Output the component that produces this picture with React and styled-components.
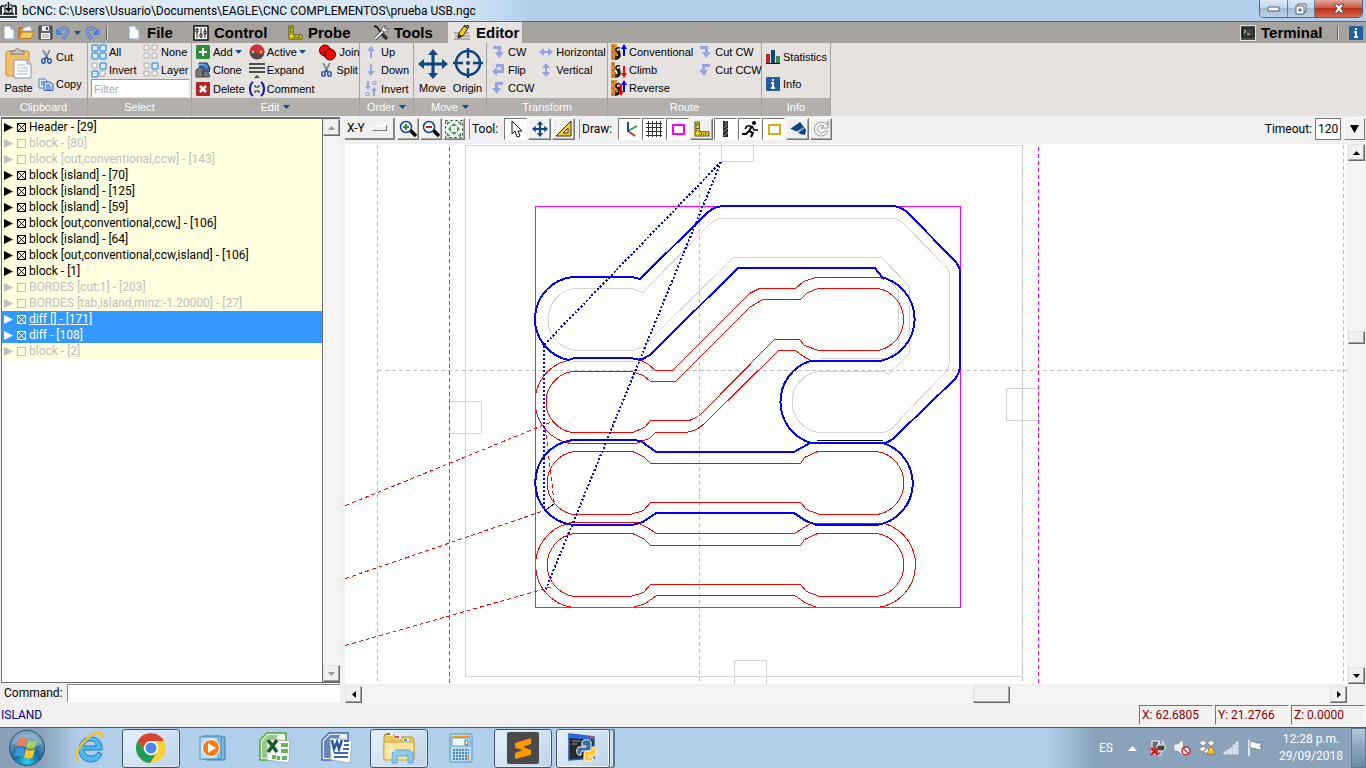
import React, { useState } from "react";
import styled, { createGlobalStyle } from "styled-components";

const blocks = [
  { name: "Header - [29]", on: true },
  { name: "block - [80]" },
  { name: "block [out,conventional,ccw] - [143]" },
  { name: "block [island] - [70]", on: true },
  { name: "block [island] - [125]", on: true },
  { name: "block [island] - [59]", on: true },
  { name: "block [out,conventional,ccw,] - [106]", on: true },
  { name: "block [island] - [64]", on: true },
  { name: "block [out,conventional,ccw,island] - [106]", on: true },
  { name: "block - [1]", on: true },
  { name: "BORDES [cut:1] - [203]" },
  { name: "BORDES [tab,island,minz:-1.20000] - [27]" },
  { name: "diff [] - [171]", on: true, selected: true, active: true },
  { name: "diff - [108]", on: true, selected: true },
  { name: "block - [2]" },
];

/* ---------- icons ---------- */

const Svg = ({ s = 16, w, h, box = "0 0 16 16", children }) => (
  <svg width={w || s} height={h || s} viewBox={box} fill="none" aria-hidden="true">
    {children}
  </svg>
);

const AppIcon = () => (
  <Svg s={17} box="0 0 17 17">
    <path d="M1 4h3M13 4h3M1 4v9M16 4v9M0 15h17M3 12h11M8.5 0v7" stroke="#000" strokeWidth="1.6" />
    <path d="M5 3v8h7V3M5 3h2M10 3h2" stroke="#000" />
    <path d="M5 6h7l-3.5 4z" fill="#000" />
  </Svg>
);

const NewIcon = () => (
  <Svg w={12} h={15} box="0 0 12 15">
    <path d="M1 1h7l3 3v10H1z" fill="#fff" stroke="#8aa0c4" />
    <path d="M8 1v3h3" fill="#cfdcf0" stroke="#7089b5" />
    <path d="M11 6v8H4" stroke="#b9c6de" />
  </Svg>
);

const OpenIcon = () => (
  <Svg w={17} h={15} box="0 0 17 15">
    <path d="M1 13V3h5l1 2h6v3" fill="#d9952f" stroke="#a8660f" />
    <path d="M5 3l7-2 2 5H5z" fill="#f4f6fb" stroke="#9fb0cc" strokeWidth=".7" />
    <path d="M1 13.5L4 7h12l-3 6.5z" fill="#f8c967" stroke="#b97a1e" />
  </Svg>
);

const SaveIcon = () => (
  <Svg w={15} h={15} box="0 0 15 15">
    <path d="M1 1h13v13H1z" fill="#5c6065" stroke="#3c4044" />
    <path d="M4 1h7v5H4z" fill="#e9ebee" />
    <path d="M8 2h2v3H8z" fill="#4d5257" />
    <path d="M3 8h9v6H3z" fill="#f2f3f5" />
    <path d="M4 10h7M4 12h7" stroke="#9a9ea3" />
  </Svg>
);

const UndoIcon = ({ flip }) => (
  <Svg w={13} h={14} box="0 0 13 14">
    <g transform={flip ? "translate(13 0) scale(-1 1)" : undefined}>
      <path d="M3 5c4-5 9-3 8.5 1C11 9 9 11 7 13" stroke="#3d6cc0" strokeWidth="3" />
      <path d="M3 5c4-5 9-3 8.5 1C11 9 9 11 7 13" stroke="#86aff0" strokeWidth="1.5" />
      <path d="M0 2v7h7z" fill="#4f80d6" />
    </g>
  </Svg>
);

const Caret = () => (
  <Svg w={7} h={4} box="0 0 7 4">
    <path d="M0 0h7L3.5 4z" fill="#11508f" />
  </Svg>
);

const SlidersIcon = () => (
  <Svg s={16}>
    <path d="M1 1h14v14H1z" fill="#fff" stroke="#111" strokeWidth="1.5" />
    <path d="M4 3v10M8 3v10M12 3v10" stroke="#222" />
    <path d="M3 4h2v3H3zM7 9h2v3H7zM11 6h2v3h-2z" fill="#fff" stroke="#111" />
  </Svg>
);

const RulerIcon = ({ size = 15 }) => (
  <Svg s={size} box="0 0 15 15">
    <path d="M1 1h4v9h9v4H1z" fill="#f0dc10" stroke="#5c5300" />
    <path d="M2 3h2M2 5h1M2 7h2M2 9h1M5 12v1M7 11v2M9 12v1M11 11v2" stroke="#222" />
  </Svg>
);

const ToolsIcon = () => (
  <Svg s={16}>
    <path d="M1 1l3 1 5 7" stroke="#222" strokeWidth="2" />
    <path d="M9 9l5 5" stroke="#333" strokeWidth="3.5" />
    <path d="M2 14l8-8" stroke="#444" strokeWidth="3.5" />
    <path d="M2 14l8-8" stroke="#f0f0f0" strokeWidth="2" />
    <path d="M9 6c-1-3 1-5 4-5l-1.5 2L13 4.5 15 3c1 2-1 4-4 4z" fill="#f0f0f0" stroke="#444" strokeWidth=".8" />
  </Svg>
);

const PencilIcon = () => (
  <Svg w={17} h={16} box="0 0 17 16">
    <path d="M0 8h15M1 11h15M0 14h16" stroke="#777" />
    <path d="M4 13l1-5 5-7 4 2-5 8z" fill="#f5c71a" stroke="#222" />
    <path d="M10 1l4 2 1-2-3-1z" fill="#d99" stroke="#222" />
    <path d="M4 13l1-4 3 2z" fill="#222" />
  </Svg>
);

const TerminalIcon = () => (
  <Svg s={16}>
    <path d="M.5.5h15v15H.5z" fill="#4a504e" stroke="#e2e2e2" />
    <path d="M2 3h12v9H2z" fill="#39403e" stroke="#151515" />
    <path d="M4 5l2 1.5L4 8M7 9h3" stroke="#ddd" />
  </Svg>
);

const InfoIcon = () => (
  <Svg s={14} box="0 0 14 14">
    <rect width="14" height="14" rx="1" fill="#1f5f9f" />
    <path d="M6 2h2v2H6zM5 5h3v5h1v2H5v-2h1V7H5z" fill="#fff" />
  </Svg>
);

const PasteIcon = () => (
  <Svg w={28} h={31} box="0 0 28 31">
    <rect x="1" y="3" width="23" height="25" rx="2" fill="#eec06a" stroke="#c88f34" />
    <path d="M6 6V3h4c0-3 5-3 5 0h4v3z" fill="#c9c9c9" stroke="#777" />
    <path d="M9 12h13l4 4v14H9z" fill="#fbfcfe" stroke="#8396b5" />
    <path d="M22 12v4h4" fill="#dbe5f3" stroke="#8396b5" />
    <path d="M12 17h8M12 20h11M12 23h11M12 26h11" stroke="#a9bbd8" />
  </Svg>
);

const CutIcon = () => (
  <Svg w={11} h={14} box="0 0 11 14">
    <path d="M2 0l5 9M9 0L4 9" stroke="#7b8794" strokeWidth="1.7" />
    <ellipse cx="2.5" cy="11" rx="1.8" ry="2.2" stroke="#2458ac" strokeWidth="1.5" />
    <ellipse cx="8.5" cy="11" rx="1.8" ry="2.2" stroke="#2458ac" strokeWidth="1.5" />
    <path d="M4 9l1.5-2L7 9" stroke="#2458ac" strokeWidth="1.5" />
  </Svg>
);

const CopyIcon = () => (
  <Svg w={16} h={13} box="0 0 16 13">
    <path d="M1 1h6l2 2v7H1z" fill="#dbe7fa" stroke="#5a7fc0" />
    <path d="M6 4h6l3 2v6.5H6z" fill="#c6d9f7" stroke="#3763af" />
    <path d="M3 4h3M3 6h2M8 7h4M8 9h5M8 11h5" stroke="#3763af" />
  </Svg>
);

const CellsIcon = ({ on = [] }) => (
  <Svg s={16}>
    {[[1, 1], [9, 1], [1, 9], [9, 9]].map(([x, y], i) => (
      <rect
        key={i}
        x={x}
        y={y}
        width={on[i] ? 6 : 5}
        height={on[i] ? 6 : 5}
        rx="1"
        fill={on[i] ? "#d9ecff" : "#f6f5f4"}
        stroke={on[i] ? "#539fe3" : "#aaa7a4"}
        strokeWidth={on[i] ? 1.5 : 1}
      />
    ))}
  </Svg>
);

const AddIcon = () => (
  <Svg s={14} box="0 0 14 14">
    <rect width="14" height="14" rx="1" fill="#338c3b" />
    <path d="M7 3v8M3 7h8" stroke="#fff" strokeWidth="2" />
  </Svg>
);

const DeleteIcon = () => (
  <Svg s={14} box="0 0 14 14">
    <rect width="14" height="14" rx="1" fill="#b52225" />
    <path d="M4 4l6 6M10 4l-6 6" stroke="#fff" strokeWidth="2.5" />
  </Svg>
);

const CloneIcon = () => (
  <Svg s={16}>
    <path d="M4 1h8l3 5-1 4H6z" fill="#2c6cad" stroke="#183e68" />
    <path d="M1 8l4-3 3 2v8H1zM8 9h4l3 5-1 1H8z" fill="#777" stroke="#444" />
    <path d="M3 4c3-3 8-2 9 2" stroke="#6db1ee" strokeWidth="1.5" />
  </Svg>
);

const ActiveIcon = () => (
  <Svg s={16}>
    <circle cx="8" cy="8" r="7.5" fill="#4e4a49" />
    <path d="M.5 8a7.5 7.5 0 0 1 15 0c-3 4-5 3-7.5 1S3 6 .5 8z" fill="#d43137" />
    <circle cx="4" cy="8" r="1.2" fill="#f2da32" />
    <circle cx="12" cy="8" r="1.2" fill="#f2da32" />
  </Svg>
);

const ExpandIcon = () => (
  <Svg w={16} h={15} box="0 0 16 15">
    <path d="M0 1h16M0 5h16M0 9h16" stroke="#4c4c4c" strokeWidth="2" />
    <path d="M5 15l3-3 3 3z" fill="#4c4c4c" />
  </Svg>
);

const CommentIcon = () => (
  <Svg s={16}>
    <path d="M4 1C0 4 0 12 4 15M12 1c4 3 4 11 0 14" stroke="#1616b5" strokeWidth="2" />
    <path d="M5 5h2v2M11 5H9v2M5 11h2V9M11 11H9V9" stroke="#222" />
  </Svg>
);

const JoinIcon = () => (
  <Svg w={19} h={17} box="0 0 19 17">
    <circle cx="7" cy="6.5" r="5.5" fill="#f00" stroke="#400" />
    <circle cx="12" cy="10.5" r="5.5" fill="#f00" stroke="#400" />
    <path d="M7 12c-1-4 1-7 5-7" stroke="#400" />
  </Svg>
);

const Arrow = ({ turn = 0, double }) => (
  <Svg w={14} h={14} box="0 0 14 14">
    <g transform={`rotate(${turn} 7 7)`} fill="#96a5e2">
      <path d={double ? "M7 0l4 5H8v4h3l-4 5-4-5h3V5H3z" : "M7 1l4 5H8v7H6V6H3z"} />
    </g>
  </Svg>
);

const TurnIcon = ({ kind }) => (
  <Svg w={14} h={14} box="0 0 14 14">
    {kind === "flip" ? (
      <path d="M5 1h8v9H6v3L1 8.5 6 4v3h4V4H5z" fill="#96a5e2" />
    ) : (
      <path
        d="M2 1h8v6h3l-5 6-4-6h3V4H2z"
        fill="#96a5e2"
        transform={kind === "ccw" ? "translate(14 0) scale(-1 1)" : undefined}
      />
    )}
  </Svg>
);

const InvertOrderIcon = () => (
  <Svg w={14} h={15} box="0 0 14 15">
    <path d="M3 0h2v5h2L4 9 1 5h2zM11 15H9V10H7l3-4 3 4h-2z" fill="#96a5e2" />
    <path d="M9 .5h3v3H9zM2 11.5h3v3H2z" stroke="#96a5e2" />
  </Svg>
);

const MoveIcon = ({ size = 30 }) => (
  <Svg s={size} box="0 0 30 30">
    <path
      d="M15 0l6 7h-4v6h6V9l7 6-7 6v-4h-6v6h4l-6 7-6-7h4v-6H7v4l-7-6 7-6v4h6V7H9z"
      fill="#0d4683"
    />
  </Svg>
);

const BigMoveIcon = () => (
  <Svg s={30} box="0 0 30 30">
    <path
      d="M15 0l5 6h-3.5v7.5H24V10l6 5-6 5v-3.5h-7.5V24H20l-5 6-5-6h3.5v-7.5H6V20l-6-5 6-5v3.5h7.5V6H10z"
      fill="#0d4683"
    />
  </Svg>
);

const OriginIcon = () => (
  <Svg s={32} box="0 0 32 32">
    <circle cx="16" cy="16" r="12" stroke="#0d4683" strokeWidth="2.5" />
    <path d="M16 1v10M16 21v10M1 16h10M21 16h10" stroke="#0d4683" strokeWidth="2.5" />
    <circle cx="16" cy="16" r="2" fill="#0d4683" />
  </Svg>
);

const RouteIcon = ({ up, down, wood = 6 }) => (
  <Svg s={16}>
    <path d={`M0 0h${wood}v16H0z`} fill="#e08a3c" />
    <path d="M1 2h2M3 5h2M1 8h2M3 11h2M1 14h2" stroke="#824510" />
    <path d="M9 4c-5-1-5 4-2 4s3 5-3 5M9 7c-4 0-2 4 0 5-1 3-3 3-5 3" stroke="#111" strokeWidth="1.5" />
    {up && <path d="M12 12h2V5h2l-3-5-3 5h2z" fill="#00f" />}
    {down && (
      <path d="M12 4h2v7h2l-3 5-3-5h2z" fill="#f00" transform={up ? "translate(-3 0)" : undefined} />
    )}
  </Svg>
);

const StatsIcon = () => (
  <Svg s={14} box="0 0 14 14">
    <path d="M0 4h4v9H0z" fill="#b2292e" />
    <path d="M5 0h4v13H5z" fill="#0d4683" />
    <path d="M10 6h4v7h-4z" fill="#418a48" />
    <path d="M0 13.5h14" stroke="#000" />
  </Svg>
);

const ZoomIcon = ({ minus }) => (
  <Svg s={18} box="0 0 18 18">
    <path d="M11 10l6 6" stroke="#000" strokeWidth="3.5" />
    <circle cx="7" cy="7" r="5.5" fill="#fff" stroke="#0d4683" strokeWidth="1.5" />
    {minus ? (
      <path d="M4 7h6" stroke="#b52225" strokeWidth="2" />
    ) : (
      <path d="M4 7h6M7 4v6" stroke="#338c3b" strokeWidth="2" />
    )}
  </Svg>
);

const FitIcon = () => (
  <Svg s={18} box="0 0 18 18">
    <path d="M.5.5h17v17H.5z" stroke="#222" strokeDasharray="2 3" />
    <path d="M9 3l3 3H6zM9 15l3-3H6zM3 9l3-3v6zM15 9l-3-3v6z" fill="#419b4a" />
    <path d="M2.5 5V2.5H5M13 2.5h2.5V5M15.5 13v2.500H13M5 15.5H2.500V13" stroke="#419b4a" strokeWidth="1.5" />
  </Svg>
);

const PointerIcon = () => (
  <Svg s={18} box="0 0 18 18">
    <path d="M5 1v13l3-3 2 6 3-1-2-5h4z" fill="#fff" stroke="#111" />
  </Svg>
);

const TriangleIcon = () => (
  <Svg s={18} box="0 0 18 18">
    <path d="M1 16L16 1v15z" fill="#f8cf2c" stroke="#2f2700" />
    <path d="M8 13l5-5v5z" fill="#fff" stroke="#2f2700" />
  </Svg>
);

const AxesIcon = () => (
  <Svg s={18} box="0 0 18 18">
    <path d="M7 11l9-5" stroke="#3d9448" strokeWidth="2" />
    <path d="M7 11l7 5" stroke="#c72d32" strokeWidth="2" />
    <path d="M7 12V2" stroke="#145092" strokeWidth="2" />
  </Svg>
);

const GridIcon = () => (
  <Svg s={18} box="0 0 18 18">
    <path d="M3.5 1v16M7.5 1v16M11.5 1v16M15.5 1v16M1 3.5h16M1 7.5h16M1 11.5h16M1 15.5h16" stroke="#333" />
  </Svg>
);

const MarginIcon = ({ color }) => (
  <Svg s={18} box="0 0 18 18">
    <rect x="4" y="5" width="11" height="9" stroke={color} strokeWidth="2" />
  </Svg>
);

const BitIcon = () => (
  <Svg s={18} box="0 0 18 18">
    <path d="M6 1h5v16H6z" fill="#2c2c2c" />
    <path d="M7 8l3-3M6 12l5-4M7 16l4-4M9 1v4" stroke="#999" />
  </Svg>
);

const RunnerIcon = () => (
  <Svg s={18} box="0 0 18 18">
    <circle cx="13" cy="3" r="2" fill="#000" />
    <path d="M11 6l-3 5 4 2-2 4M8 11l-3 3H1" stroke="#000" strokeWidth="2" />
    <path d="M10 6L6 6 4 9M11 6l2 4h4" stroke="#000" strokeWidth="1.5" />
  </Svg>
);

const CameraIcon = () => (
  <Svg s={18} box="0 0 18 18">
    <path d="M1 9l10-7 4 5-8 5z" fill="#0d4683" />
    <path d="M9 12l6-5 2 3-1 5-5-1z" fill="#0d4683" />
    <path d="M1 9l7 3M10 12l5-4" stroke="#f0f0f0" strokeWidth=".8" />
  </Svg>
);

const RefreshIcon = () => (
  <Svg s={18} box="0 0 18 18">
    <path d="M15 5A7 7 0 1 0 16 11h-3a4 4 0 1 1-1-5l-3 2h7V1z" fill="#f7f7f7" stroke="#9b9b9b" />
  </Svg>
);

/* ---------- taskbar icons ---------- */

const StartOrb = () => (
  <Svg s={38} box="0 0 38 38">
    <defs>
      <radialGradient id="orb" cx=".5" cy=".9" r=".9">
        <stop offset="0" stopColor="#2cd2f5" />
        <stop offset=".4" stopColor="#17679f" />
        <stop offset="1" stopColor="#8fb0c5" />
      </radialGradient>
    </defs>
    <circle cx="19" cy="19" r="17.5" fill="url(#orb)" stroke="#294c6b" />
    <path d="M11 10c3-2 5-2 8 0l-2 8c-3-2-6-2-9 0z" fill="#ea5a23" />
    <path d="M20 11c3 2 6 2 9 0l-2 8c-3 2-6 2-9 0z" fill="#8cc63a" />
    <path d="M8 20c3-2 6-2 9 0l-2 8c-3-2-6-2-9 0z" fill="#3f97dc" />
    <path d="M18 20c3 2 6 2 9 0l-2 8c-3 2-6 2-9 0z" fill="#fbc42a" />
    <path d="M4 15C7 2 31 2 34 15c-8 4-20 4-30 0z" fill="#fff" opacity=".22" />
  </Svg>
);

const ExplorerE = () => (
  <Svg s={32} box="0 0 32 32">
    <path d="M25 20c-2 3-4 4-7 4-4 0-6-2-7-6h18c1-8-4-13-11-13S6 10 6 17c0 8 5 13 12 13 5 0 9-3 11-8zM11 14c1-4 3-5 6-5 4 0 6 2 6 5z" fill="#4fb8ec" stroke="#1b7fc4" />
    <path d="M5 29c-5-4 1-16 10-23S29-1 29 6" stroke="#f5bf26" strokeWidth="2.5" />
  </Svg>
);

const ChromeIcon = () => (
  <Svg s={30} box="0 0 30 30">
    <circle cx="15" cy="15" r="15" fill="#fbd13e" />
    <path d="M2 7.5A15 15 0 0 1 28 8H15a7 7 0 0 0-6 11z" fill="#da4437" />
    <path d="M2 7.5A15 15 0 0 0 14 30l7-11c-3 5-9 4-12 0z" fill="#1e9c59" />
    <circle cx="15" cy="15" r="7" fill="#fff" />
    <circle cx="15" cy="15" r="5.5" fill="#4687f0" />
  </Svg>
);

const PlayerIcon = () => (
  <Svg s={28} box="0 0 28 28">
    <path d="M7 3h19v23H7z" fill="#79bade" stroke="#3a7da8" />
    <path d="M4 2h18v23H4z" fill="#9ed2ee" stroke="#3a7da8" />
    <path d="M1 3h18v22H1z" fill="#b9e0f3" stroke="#4c93bd" />
    <circle cx="12" cy="14" r="8.5" fill="#f47c17" stroke="#fff" />
    <path d="M9 9l8 5-8 5z" fill="#fff" />
  </Svg>
);

const ExcelIcon = () => (
  <Svg s={32} box="0 0 32 32">
    <path d="M1 28V8l7-7h19v27z" fill="#eef7ea" stroke="#4ba82e" strokeWidth="1.5" />
    <path d="M3 26V9l6-6h10L7 26z" fill="#4ba82e" opacity=".55" />
    <path d="M8 7l23 2-1 22-22-3z" fill="#fbfdfb" stroke="#a5b4bf" />
    <path d="M22 11h7v4h-7zM22 17h7v4h-7zM13 23h4v4h-4zM18 24h3v4h-3zM23 24h5v4h-5z" fill="#69b45a" />
    <path d="M9 8l9 12M18 8L9 20" stroke="#17591f" strokeWidth="3.5" />
  </Svg>
);

const WordIcon = () => (
  <Svg s={32} box="0 0 32 32">
    <path d="M1 28V8l7-7h19v27z" fill="#eef4f8" stroke="#4467ae" strokeWidth="1.5" />
    <path d="M3 26V9l6-6h10L9 26z" fill="#2c55a0" opacity=".7" />
    <path d="M9 6l22 2-2 23-19-3z" fill="#fff" stroke="#a5b4bf" />
    <path d="M11 8l2 9 3-7 2 7 3-9" stroke="#2c55a0" strokeWidth="2.5" />
    <path d="M23 9h5M23 13h5M22 17h6M13 21h14M13 25h14" stroke="#3d66b3" strokeWidth="2" />
  </Svg>
);

const FolderIcon = () => (
  <Svg s={32} box="0 0 32 32">
    <path d="M1 26V5l1-3h8l2 3h17l2 2v20z" fill="#e9c65c" stroke="#b9942e" />
    <path d="M4 2h6M12 5h6M20 8h6" stroke="#fff" strokeWidth="3" />
    <path d="M4 2h3M12 5h3" stroke="#2f9e3f" strokeWidth="2" />
    <path d="M13 5h3" stroke="#d44" strokeWidth="2" />
    <path d="M21 8h3" stroke="#3b8ede" strokeWidth="2" />
    <path d="M1 10h30v18H1z" fill="#f8e59b" stroke="#c9a745" />
    <path d="M9 31V21l3-3h14l4 3v10h-5v-7H14v7z" fill="#8fcbe8" stroke="#5ba5cb" />
    <path d="M8 12v14M3 19h10" stroke="#fff" opacity=".7" />
  </Svg>
);

const CalcIcon = () => (
  <Svg w={24} h={30} box="0 0 24 30">
    <rect x="1" y="1" width="22" height="28" rx="1" fill="#b7dbf2" stroke="#5795c2" />
    <path d="M3 3h18v2H3z" fill="#f49a2c" />
    <path d="M3 5h18v8H3z" fill="#eef8fd" stroke="#6a9fbe" />
    <path d="M16 7h3v5h-3z" stroke="#4a6475" />
    <path d="M4 17h16M4 20h16M4 23h16M4 26h16" stroke="#4c84aa" strokeWidth="2" strokeDasharray="2 1" />
    <path d="M19 22v5" stroke="#f49a2c" strokeWidth="2" />
  </Svg>
);

const SublimeIcon = () => (
  <Svg s={32} box="0 0 32 32">
    <rect width="32" height="32" rx="2" fill="#4a4a4a" />
    <path d="M8 11l16-5v6l-8 3 8 3v5L8 27v-6l8-3-8-2z" fill="#ff9800" />
  </Svg>
);

const PythonIcon = () => (
  <Svg s={30} box="0 0 30 30">
    <path d="M1 1l25 3v21L1 27z" fill="#2a2a2a" stroke="#1f5ac6" strokeWidth="1.5" />
    <path d="M1 1l25 3v3L1 5z" fill="#2868df" />
    <path d="M22 4h3" stroke="#e44" strokeWidth="2" />
    <path d="M4 8h8M4 11h5" stroke="#999" />
    <path d="M14 14h4v-1h-4V9c0-3 9-3 9 0v6c0 2-1 3-3 3h-5c-2 0-2 2-2 4h-2c-3 0-3-8 0-8z" fill="#376f9f" stroke="#fff" />
    <path d="M24 14h2c3 0 3 8 0 9h-5v1h4v2c0 3-9 3-9 0v-5c0-2 1-3 3-3h3c2 0 2-1 2-4z" fill="#fdc92f" stroke="#fff" />
  </Svg>
);

const PowerIcon = () => (
  <Svg s={16}>
    <path d="M2 1h7v13H2z" fill="#6b6b6b" stroke="#fff" />
    <path d="M9 4V1M13 4V1M7 5h8v4l-2 2H9L7 9zM11 11v4H7" stroke="#fff" fill="#444" />
    <path d="M1 8l7 7M8 8l-7 7" stroke="#e51212" strokeWidth="2" />
  </Svg>
);

const VolumeIcon = () => (
  <Svg s={17} box="0 0 17 17">
    <path d="M1 5h3l4-4v13l-4-4H1z" fill="#eee" stroke="#fff" />
    <circle cx="12" cy="11" r="4" fill="#fff" stroke="#d8262b" strokeWidth="1.5" />
    <path d="M9 8l6 6" stroke="#d8262b" strokeWidth="1.5" />
  </Svg>
);

const DropboxIcon = () => (
  <Svg s={16}>
    <path d="M4 0l4 3-4 3-4-3zM12 0l4 3-4 3-4-3zM4 6l4 3-4 3-4-3zM8 8l4 3-4 3-4-3z" fill="#f5f5f5" stroke="#555" strokeWidth=".5" />
    <path d="M8 13c2-1 1-6 4-6s2 5 4 6v1H8z" fill="#ffc21d" stroke="#8c6500" strokeWidth=".7" />
  </Svg>
);

const SignalIcon = () => (
  <Svg w={16} h={14} box="0 0 16 14">
    <path d="M1 13v-2h2v2zM4 13V9h2v4zM7 13V7h2v6zM10 13V4h2v9zM13 13V1h2v12z" fill="#b9c9d9" stroke="#fff" strokeWidth=".7" />
  </Svg>
);

const FlagIcon = () => (
  <Svg s={16}>
    <path d="M2 0v16" stroke="#fff" strokeWidth="1.5" />
    <path d="M3 2c3-2 4 1 7 1h5l-2 3 2 3c-4 2-6-1-12-1z" fill="#fff" stroke="#45525f" strokeWidth=".6" />
  </Svg>
);

/* ---------- toolpath view ---------- */

const PAD_ROW =
  "M573 451A32 32 0 0 0 573 514H630L643 510L650 502H800L806 509L819 514H877A32 32 0 0 0 877 451H817L804 457L800 463H650L643 456L632 451Z";

const Toolpaths = () => (
  <svg width="100%" height="100%" fill="none" shapeRendering="crispEdges" role="img" aria-label="Toolpath">
    <g transform="translate(-344.5 -143.5)" strokeWidth="1">
      <g stroke="#d3d3d3">
        <rect x="465" y="145" width="557" height="531" />
        <rect x="721" y="129" width="32" height="32" />
        <rect x="449" y="401" width="32" height="32" />
        <rect x="1006" y="388" width="32" height="32" />
        <rect x="734" y="660" width="32" height="32" />
      </g>
      <path d="M377 144V684M699 144V684M1022 144V684M1343 144V684M377 370H1348" stroke="#bebebe" strokeDasharray="4 3" />
      <path d="M449 146V684M1038 146V684" stroke="#f0f" strokeDasharray="4 3" />

      <g stroke="#d3d3d3">
        <path d="M573 288A31.4 31.4 0 0 0 575 350H633L645 345L654 335L733 257H881L909 286V353L888 374L883 371H817A31 31 0 0 0 817 432H883Q893 430 901 417L944 373Q949 368 949 360V275Q949 268 943 264L903 223Q897 218 893 218H719L712 221L642 292L631 288Z" />
        <path d="M888 279L898 290V348L888 358H818M572 361H636" />
      </g>

      <g stroke="#f00">
        <path d="M641 360L648 364L655 370H672L749 293L759 288H795L803 281L815 277H880L884 279" />
        <path d="M567 360A42.4 42.4 0 0 0 570 443H635L649 438L655 432H685Q696 431 705 422L778 350H795L803 356L810 360" />
        <path d="M572 371A30.8 30.8 0 0 0 572 432H632L644 427L650 420H689L698 416L774 339H799L804 345L818 350H878A31.7 31.7 0 0 0 878 288H818L807 292L800 299H762L749 307L675 381H650L643 375L631 371Z" />
        <path d={PAD_ROW} />
        <path d={PAD_ROW} transform="translate(0 82)" />
        <path d="M568 523A42.7 42.7 0 0 0 573 607H632L645 603L656 595H794L806 603L817 607H877A43 43 0 0 0 884 523L810 523L794 533H656L645 526L636 522H568" />
        <path d="M345 505L552 421M345 578L547 509M345 645L552 586M545 428L554 505" strokeDasharray="4 3" />
      </g>

      <rect x="535" y="206" width="425" height="401" stroke="#f0f" />
      <path d="M816 440H882M546 509L554 503" stroke="#000" />
    </g>

    <g transform="translate(-345 -144)" stroke="#00f" strokeWidth="2">
      <path d="M573 277H632L640 279L701 219Q712 206 723 206H893Q903 207 910 215L952 258Q960 265 960 273V365Q960 373 955 379L898 434Q890 443 883 443H811A43 43 0 0 1 810 361H880A42.8 42.8 0 0 0 887 279L882 277L875 268H738L660 345Q650 357 640 360L631 358H575L568 360A42.1 42.1 0 0 1 573 277Z" />
      <path d="M573 440A42.8 42.8 0 0 0 573 525H632L643 522L656 513H794L806 521L817 525H877A42.2 42.2 0 0 0 883 443H818L810 443L794 452H656L641 441L632 440Z" />
      <path d="M721 162L544 345V509M721 162L545 591" strokeDasharray="2 2" />
    </g>
  </svg>
);

/* ---------- page ---------- */

const Tool = ({ icon, children, menu }) => (
  <RibbonButton type="button">
    <IconSlot>{icon}</IconSlot>
    <span>{children}</span>
    {menu && <Caret />}
  </RibbonButton>
);

const RibbonGroup = ({ title, width, menu, children }) => (
  <Group $width={width}>
    <GroupBody>{children}</GroupBody>
    <GroupTitle>
      {title}
      {menu && <Caret />}
    </GroupTitle>
  </Group>
);

export default function App() {
  const [rows, setRows] = useState(blocks);

  const toggle = (index) =>
    setRows(rows.map((row, i) => (i === index ? { ...row, on: !row.on } : row)));

  return (
    <>
      <GlobalStyle />
      <Window>
        <TitleBar>
          <AppIcon />
          <Title>bCNC: C:\Users\Usuario\Documents\EAGLE\CNC COMPLEMENTOS\prueba USB.ngc</Title>
          <WindowButtons>
            <WindowButton type="button" aria-label="Minimize" $width={28}>
              <Svg w={13} h={6} box="0 0 13 6"><path d="M1 1h11v4H1z" fill="#fff" stroke="#555d6b" /></Svg>
            </WindowButton>
            <WindowButton type="button" aria-label="Restore" $width={27}>
              <Svg s={12} box="0 0 12 12">
                <path d="M3 1h8v8H3z" fill="#fff" stroke="#555d6b" />
                <path d="M1 3h8v8H1z" fill="#fff" stroke="#555d6b" />
                <path d="M4 6h2v2H4z" fill="#a5b8cd" stroke="#555d6b" />
              </Svg>
            </WindowButton>
            <WindowButton type="button" aria-label="Close" $width={47} $close>
              <Svg w={12} h={11} box="0 0 12 11">
                <path d="M1 1h3l2 2 2-2h3L8 5.5l3 4.5H8L6 8l-2 2H1l3-4.5z" fill="#fff" stroke="#5a4548" />
              </Svg>
            </WindowButton>
          </WindowButtons>
        </TitleBar>

        <TabBar>
          <QuickAccess>
            <IconButton type="button" aria-label="New"><NewIcon /></IconButton>
            <IconButton type="button" aria-label="Open"><OpenIcon /></IconButton>
            <IconButton type="button" aria-label="Save"><SaveIcon /></IconButton>
            <IconButton type="button" aria-label="Undo"><UndoIcon /></IconButton>
            <IconButton type="button" aria-label="Undo list" $menu><Caret /></IconButton>
            <IconButton type="button" aria-label="Redo"><UndoIcon flip /></IconButton>
            <Divider />
          </QuickAccess>
          <Tab type="button" $width={67}><IconSlot><NewIcon /></IconSlot>File</Tab>
          <Tab type="button" $width={95}><SlidersIcon />Control</Tab>
          <Tab type="button" $width={85}><RulerIcon />Probe</Tab>
          <Tab type="button" $width={79}><ToolsIcon />Tools</Tab>
          <Tab type="button" $width={74} $active><PencilIcon />Editor</Tab>
          <Spacer />
          <Tab type="button" $width={97}><TerminalIcon />Terminal</Tab>
          <Divider />
          <IconButton type="button" aria-label="About"><InfoIcon /></IconButton>
        </TabBar>

        <Ribbon>
          <RibbonGroup title="Clipboard" width={88}>
            <BigButton type="button"><PasteIcon />Paste</BigButton>
            <Stack>
              <Tool icon={<CutIcon />}>Cut</Tool>
              <Tool icon={<CopyIcon />}>Copy</Tool>
            </Stack>
          </RibbonGroup>
          <RibbonGroup title="Select" width={104}>
            <SelectGrid>
              <Tool icon={<CellsIcon on={[1, 1, 1, 1]} />}>All</Tool>
              <Tool icon={<CellsIcon />}>None</Tool>
              <Tool icon={<CellsIcon on={[0, 1, 1, 0]} />}>Invert</Tool>
              <Tool icon={<CellsIcon on={[0, 1, 0, 0]} />}>Layer</Tool>
              <FilterInput placeholder="Filter" aria-label="Filter" />
            </SelectGrid>
          </RibbonGroup>
          <RibbonGroup title="Edit" width={168} menu>
            <Stack>
              <Tool icon={<AddIcon />} menu>Add</Tool>
              <Tool icon={<CloneIcon />}>Clone</Tool>
              <Tool icon={<DeleteIcon />}>Delete</Tool>
            </Stack>
            <Stack>
              <Tool icon={<ActiveIcon />} menu>Active</Tool>
              <Tool icon={<ExpandIcon />}>Expand</Tool>
              <Tool icon={<CommentIcon />}>Comment</Tool>
            </Stack>
            <TopStack>
              <Tool icon={<JoinIcon />}>Join</Tool>
              <Tool icon={<CutIcon />}>Split</Tool>
            </TopStack>
          </RibbonGroup>
          <RibbonGroup title="Order" width={54} menu>
            <Stack>
              <Tool icon={<Arrow />}>Up</Tool>
              <Tool icon={<Arrow turn={180} />}>Down</Tool>
              <Tool icon={<InvertOrderIcon />}>Invert</Tool>
            </Stack>
          </RibbonGroup>
          <RibbonGroup title="Move" width={73} menu>
            <BigButton type="button"><BigMoveIcon />Move</BigButton>
            <BigButton type="button"><OriginIcon />Origin</BigButton>
          </RibbonGroup>
          <RibbonGroup title="Transform" width={121}>
            <TopStack>
              <Tool icon={<TurnIcon kind="cw" />}>CW</Tool>
              <Tool icon={<TurnIcon kind="flip" />}>Flip</Tool>
              <Tool icon={<TurnIcon kind="ccw" />}>CCW</Tool>
            </TopStack>
            <TopStack>
              <Tool icon={<Arrow turn={90} double />}>Horizontal</Tool>
              <Tool icon={<Arrow double />}>Vertical</Tool>
            </TopStack>
          </RibbonGroup>
          <RibbonGroup title="Route" width={154}>
            <TopStack>
              <Tool icon={<RouteIcon up />}>Conventional</Tool>
              <Tool icon={<RouteIcon down wood={4} />}>Climb</Tool>
              <Tool icon={<RouteIcon up down />}>Reverse</Tool>
            </TopStack>
            <TopStack>
              <Tool icon={<TurnIcon kind="cw" />}>Cut CW</Tool>
              <Tool icon={<TurnIcon kind="ccw" />}>Cut CCW</Tool>
            </TopStack>
          </RibbonGroup>
          <RibbonGroup title="Info" width={69}>
            <Stack>
              <Tool icon={<StatsIcon />}>Statistics</Tool>
              <Tool icon={<InfoIcon />}>Info</Tool>
            </Stack>
          </RibbonGroup>
        </Ribbon>

        <Main>
          <Sidebar>
            <ListBox>
              <List>
                {rows.map((row, i) => (
                  <Row key={i} $off={!row.on} $selected={row.selected} $active={row.active}>
                    <Svg w={9} h={9} box="0 0 9 9"><path d="M0 0l9 4.5L0 9z" fill="currentColor" /></Svg>
                    <label>
                      <input type="checkbox" checked={!!row.on} onChange={() => toggle(i)} />
                      {row.name}
                    </label>
                  </Row>
                ))}
              </List>
              <ScrollColumn>
                <ScrollButton type="button" aria-label="List up" $dim>
                  <Svg w={7} h={4} box="0 0 7 4"><path d="M0 4h7L3.5 0z" fill="currentColor" /></Svg>
                </ScrollButton>
                <ScrollButton type="button" aria-label="List down" $dim>
                  <Svg w={7} h={4} box="0 0 7 4"><path d="M0 0h7L3.5 4z" fill="currentColor" /></Svg>
                </ScrollButton>
              </ScrollColumn>
            </ListBox>
            <CommandLine>
              <label htmlFor="command">Command:</label>
              <input id="command" />
            </CommandLine>
          </Sidebar>

          <Viewer>
            <Toolbar>
              <ViewSelect>
                <select aria-label="View" defaultValue="X-Y">
                  <option>X-Y</option>
                  <option>X-Z</option>
                  <option>Y-Z</option>
                </select>
                <i />
              </ViewSelect>
              <ToolButton type="button" aria-label="Zoom in"><ZoomIcon /></ToolButton>
              <ToolButton type="button" aria-label="Zoom out"><ZoomIcon minus /></ToolButton>
              <ToolButton type="button" aria-label="Fit"><FitIcon /></ToolButton>
              <ToolLabel>Tool:</ToolLabel>
              <ToolButton type="button" aria-label="Select" $wide $on><PointerIcon /></ToolButton>
              <ToolButton type="button" aria-label="Pan" $wide><MoveIcon size={16} /></ToolButton>
              <ToolButton type="button" aria-label="Measure" $wide><TriangleIcon /></ToolButton>
              <ToolLabel>Draw:</ToolLabel>
              <ToolButton type="button" aria-label="Axes" $wide $on><AxesIcon /></ToolButton>
              <ToolButton type="button" aria-label="Grid" $wide $on><GridIcon /></ToolButton>
              <ToolButton type="button" aria-label="Margins" $wide $on><MarginIcon color="#f0f" /></ToolButton>
              <ToolButton type="button" aria-label="Probe" $wide><RulerIcon size={16} /></ToolButton>
              <ToolButton type="button" aria-label="Paths" $wide $on><BitIcon /></ToolButton>
              <ToolButton type="button" aria-label="Rapid" $wide $on><RunnerIcon /></ToolButton>
              <ToolButton type="button" aria-label="Workspace" $wide $on><MarginIcon color="#d9ac1a" /></ToolButton>
              <ToolButton type="button" aria-label="Camera" $wide><CameraIcon /></ToolButton>
              <ToolButton type="button" aria-label="Refresh"><RefreshIcon /></ToolButton>
              <Spacer />
              <TimeoutField>
                <label htmlFor="timeout">Timeout:</label>
                <input id="timeout" defaultValue="120" />
                <button type="button" aria-label="Timeout list">
                  <Svg w={9} h={8} box="0 0 9 8"><path d="M0 0h9L4.5 8z" fill="#000" /></Svg>
                </button>
              </TimeoutField>
            </Toolbar>
            <CanvasArea>
              <Canvas><Toolpaths /></Canvas>
              <ScrollColumn>
                <ScrollButton type="button" aria-label="Up">
                  <Svg w={7} h={4} box="0 0 7 4"><path d="M0 4h7L3.5 0z" fill="currentColor" /></Svg>
                </ScrollButton>
                <VerticalThumb />
                <ScrollButton type="button" aria-label="Down">
                  <Svg w={7} h={4} box="0 0 7 4"><path d="M0 0h7L3.5 4z" fill="currentColor" /></Svg>
                </ScrollButton>
              </ScrollColumn>
              <ScrollLine>
                <ScrollButton type="button" aria-label="Left">
                  <Svg w={4} h={7} box="0 0 4 7"><path d="M4 0v7L0 3.5z" fill="currentColor" /></Svg>
                </ScrollButton>
                <HorizontalThumb />
                <ScrollButton type="button" aria-label="Right">
                  <Svg w={4} h={7} box="0 0 4 7"><path d="M0 0v7l4-3.5z" fill="currentColor" /></Svg>
                </ScrollButton>
              </ScrollLine>
            </CanvasArea>
          </Viewer>
        </Main>

        <StatusBar>
          <span>ISLAND</span>
          <Spacer />
          <Coord>X: 62.6805</Coord>
          <Coord>Y: 21.2766</Coord>
          <Coord>Z: 0.0000</Coord>
        </StatusBar>

        <Taskbar>
          <StartButton type="button" aria-label="Start"><StartOrb /></StartButton>
          <Task type="button" aria-label="Internet Explorer"><ExplorerE /></Task>
          <Task type="button" aria-label="Chrome" $open><ChromeIcon /></Task>
          <Task type="button" aria-label="Media Player"><PlayerIcon /></Task>
          <Task type="button" aria-label="Excel"><ExcelIcon /></Task>
          <Task type="button" aria-label="Word"><WordIcon /></Task>
          <Task type="button" aria-label="Files" $open><FolderIcon /></Task>
          <Task type="button" aria-label="Calculator"><CalcIcon /></Task>
          <Task type="button" aria-label="Sublime Text" $open><SublimeIcon /></Task>
          <Task type="button" aria-label="Python" $open $stacked><PythonIcon /></Task>
          <Spacer />
          <Tray>
            <Lang>ES</Lang>
            <Svg w={19} h={5} box="-5 0 19 5"><path d="M0 5h9L4.5 0z" fill="#fff" /></Svg>
            <PowerIcon />
            <VolumeIcon />
            <DropboxIcon />
            <SignalIcon />
            <FlagIcon />
            <Clock>
              <span>12:28 p.m.</span>
              <span>29/09/2018</span>
            </Clock>
            <ShowDesktop type="button" aria-label="Show desktop" />
          </Tray>
        </Taskbar>
      </Window>
    </>
  );
}

const GlobalStyle = createGlobalStyle`
  * {
    box-sizing: border-box;
  }

  body {
    margin: 0;
    font-family: Roboto, "Open Sans", sans-serif;
    font-size: 12px;
    color: #000;
    background: #f0f0f0;
  }

  button, input, select {
    font: inherit;
    color: inherit;
    margin: 0;
    padding: 0;
    border: 0;
    background: none;
  }

  svg {
    display: block;
    flex: none;
  }
`;

const Window = styled.div`
  display: flex;
  flex-direction: column;
  height: 100vh;
  overflow: hidden;
`;

const Spacer = styled.div`
  flex: 1;
`;

const TitleBar = styled.header`
  display: flex;
  align-items: center;
  height: 22px;
  flex: none;
  gap: 5px;
  background: linear-gradient(90deg, #e4eef8 0, #d5e5f5 460px, #b1cfeb 530px);
  border-bottom: 1px solid #5a6878;
`;

const Title = styled.span`
  flex: 1;
  white-space: nowrap;
`;

const WindowButtons = styled.div`
  display: flex;
  align-self: flex-start;
  height: 18px;
  margin-right: 3px;
  border: 1px solid #54647a;
  border-top: 0;
  border-radius: 0 0 5px 5px;
  overflow: hidden;
`;

const WindowButton = styled.button`
  display: flex;
  align-items: center;
  justify-content: center;
  width: ${({ $width }) => $width}px;
  border-right: ${({ $close }) => ($close ? "0" : "1px solid #6c7e95")};
  background: ${({ $close }) =>
    $close
      ? "linear-gradient(#e0a79a, #cf5a45 45%, #b92f16 50%, #d2664e)"
      : "linear-gradient(#dbe8f5, #c3d6ea 45%, #a3bbd4 50%, #bdd1e6)"};
`;

const TabBar = styled.nav`
  display: flex;
  align-items: center;
  height: 21px;
  flex: none;
  padding-right: 3px;
  background: #a6a29e;
  font: bold 15px "Liberation Sans", Arial, sans-serif;
`;

const QuickAccess = styled.div`
  display: flex;
  align-items: center;
  gap: 3px;
  width: 122px;
  padding-left: 3px;
`;

const IconButton = styled.button`
  display: flex;
  align-items: center;
  padding: ${({ $menu }) => ($menu ? "0 2px" : "0")};
`;

const Divider = styled.i`
  width: 2px;
  height: 14px;
  margin: 0 10px 0 4px;
  border-left: 1px solid #66625f;
  border-right: 1px solid #d8d4d0;
`;

const Tab = styled.button`
  display: flex;
  align-items: center;
  gap: 5px;
  height: 21px;
  padding-left: ${({ $active }) => ($active ? 6 : 4)}px;
  width: ${({ $width }) => $width}px;
  background: ${({ $active }) => ($active ? "#e6e2df" : "none")};
`;

const Ribbon = styled.section`
  display: flex;
  height: 73px;
  flex: none;
  background: #e6e2df;
  font-family: "Liberation Sans", Arial, sans-serif;
  font-size: 11px;
`;

const Group = styled.div`
  display: flex;
  flex-direction: column;
  width: ${({ $width }) => $width}px;
  border-right: 1px solid #a6a29e;
`;

const GroupBody = styled.div`
  display: flex;
  flex: 1;
  gap: 4px;
  padding: 0 3px;
`;

const GroupTitle = styled.div`
  display: flex;
  align-items: center;
  justify-content: center;
  gap: 4px;
  height: 18px;
  background: #b3afac;
  color: #fff;
`;

const Stack = styled.div`
  display: flex;
  flex-direction: column;
  justify-content: space-around;
`;

const TopStack = styled(Stack)`
  justify-content: flex-start;
`;

const IconSlot = styled.span`
  display: flex;
  justify-content: center;
  min-width: 16px;
`;

const RibbonButton = styled.button`
  display: flex;
  align-items: center;
  gap: 2px;
  height: 18px;
  white-space: nowrap;
`;

const BigButton = styled.button`
  display: flex;
  flex-direction: column;
  align-items: center;
  justify-content: flex-end;
  gap: 3px;
  min-width: 31px;
  padding-bottom: 4px;
`;

const SelectGrid = styled.div`
  display: grid;
  grid-template-columns: 52px 48px;
  grid-template-rows: 18px 18px 18px;
  flex: 1;
`;

const FilterInput = styled.input`
  grid-column: 1 / 3;
  width: 98px;
  height: 18px;
  padding-left: 2px;
  background: #fff;
  border-top: 1px solid #999;
  border-left: 1px solid #999;

  &::placeholder {
    color: #a9a9a9;
  }
`;

const Main = styled.main`
  display: flex;
  flex: 1;
  min-height: 0;
`;

const Sidebar = styled.aside`
  display: flex;
  flex-direction: column;
  width: 341px;
  padding: 1px 1px 0;
`;

const ListBox = styled.div`
  display: flex;
  flex: 1;
  min-height: 0;
  border: 1px solid #6b6b6b;
  border-top-width: 2px;
  border-right: 0;
  background: #fff;
`;

const List = styled.ul`
  flex: 1;
  margin: 0;
  padding: 0;
  list-style: none;
  border-right: 1px solid #6b6b6b;
`;

const Row = styled.li`
  display: flex;
  align-items: center;
  gap: 4px;
  height: 16px;
  padding-left: 2px;
  white-space: nowrap;
  background: ${({ $selected }) => ($selected ? "#3399ff" : "#ffffe0")};
  color: ${({ $selected, $off }) => ($selected ? "#fff" : $off ? "#bebebe" : "#000")};

  label {
    display: flex;
    align-items: center;
    gap: 3px;
    text-decoration: ${({ $active }) => ($active ? "underline" : "none")};
  }

  input {
    appearance: none;
    width: 9px;
    height: 9px;
    border: 1px solid currentColor;
  }

  input:checked {
    background:
      linear-gradient(45deg, transparent 44%, currentColor 44%, currentColor 56%, transparent 56%),
      linear-gradient(-45deg, transparent 44%, currentColor 44%, currentColor 56%, transparent 56%);
  }
`;

const trough = `
  background: repeating-conic-gradient(#fff 0 25%, #ececec 0 50%) 0 0 / 2px 2px;
`;

const raised = `
  background: #f0f0f0;
  border: 1px solid;
  border-color: #e3e3e3 #696969 #696969 #e3e3e3;
  box-shadow: inset -1px -1px #a0a0a0;
`;

const ScrollColumn = styled.div`
  display: flex;
  flex-direction: column;
  justify-content: space-between;
  width: 17px;
  ${trough}
`;

const ScrollLine = styled.div`
  display: flex;
  justify-content: space-between;
  height: 17px;
  ${trough}
`;

const ScrollButton = styled.button`
  display: flex;
  align-items: center;
  justify-content: center;
  width: 17px;
  height: 17px;
  ${raised}
  color: ${({ $dim }) => ($dim ? "#999" : "#000")};
`;

const HorizontalThumb = styled.div`
  width: 37px;
  margin: 0 auto 0 61%;
  ${raised}
`;

const VerticalThumb = styled.div`
  height: 13px;
  margin: 170px 0 auto;
  ${raised}
`;

const CommandLine = styled.div`
  display: flex;
  align-items: center;
  height: 20px;
  padding-left: 3px;
  gap: 4px;

  input {
    flex: 1;
    height: 18px;
    background: #fff;
    border-top: 1px solid #8c8c8c;
    border-left: 1px solid #8c8c8c;
  }
`;

const Viewer = styled.section`
  display: flex;
  flex-direction: column;
  flex: 1;
  min-width: 0;
  padding: 0 1px 0 4px;
`;

const Toolbar = styled.div`
  display: flex;
  align-items: center;
  height: 28px;
  flex: none;
  padding-bottom: 2px;
`;

const ViewSelect = styled.div`
  display: flex;
  align-items: center;
  width: 50px;
  height: 22px;
  margin-right: 2px;
  border-right: 2px solid #888;
  border-bottom: 2px solid #888;

  select {
    appearance: none;
    width: 27px;
    padding-left: 2px;
  }

  i {
    width: 15px;
    height: 6px;
    border: 1px solid;
    border-color: #fff #777 #777 #fff;
  }
`;

const ToolButton = styled.button`
  display: flex;
  align-items: center;
  justify-content: center;
  flex: none;
  width: ${({ $wide }) => ($wide ? 23 : 22)}px;
  height: 22px;
  margin-right: 1px;
  border: 1px solid;
  border-color: ${({ $on }) => ($on ? "#777 #fff #fff #777" : "#fff #777 #777 #fff")};
  background: ${({ $on }) => ($on ? "#fff" : "#f0f0f0")};
  box-shadow: ${({ $on }) => ($on ? "none" : "inset -1px -1px #aaa")};
`;

const ToolLabel = styled.span`
  display: flex;
  align-items: center;
  height: 20px;
  margin-left: 3px;
  padding: 0 6px 0 2px;
  border-left: 1px solid #888;
`;

const TimeoutField = styled.div`
  display: flex;
  align-items: center;
  gap: 3px;

  input {
    width: 26px;
    height: 22px;
    padding-left: 2px;
    background: #fff;
    border: 1px solid #777;
  }

  button {
    display: flex;
    align-items: center;
    justify-content: center;
    width: 21px;
    height: 22px;
    border: 1px solid;
    border-color: #fff #777 #777 #fff;
  }
`;

const CanvasArea = styled.div`
  display: grid;
  grid-template-columns: 1fr 17px;
  grid-template-rows: 1fr 17px;
  gap: 2px 1px;
  flex: 1;
  min-height: 0;
`;

const Canvas = styled.div`
  min-width: 0;
  min-height: 0;
  overflow: hidden;
  background: #fff;
`;

const StatusBar = styled.footer`
  display: flex;
  align-items: center;
  height: 25px;
  flex: none;
  gap: 2px;
  padding: 0 1px;
  color: #00008b;
  border-bottom: 1px solid #47586a;
`;

const Coord = styled.span`
  width: 74px;
  height: 20px;
  padding-left: 2px;
  line-height: 18px;
  color: #8b0000;
  border: 1px solid;
  border-color: #777 #fff #fff #777;
`;

const Taskbar = styled.footer`
  display: flex;
  align-items: center;
  height: 40px;
  flex: none;
  gap: 4px;
  background:
    linear-gradient(90deg, #8aa0b8 0, #8aa0b8 40px, transparent 80px),
    linear-gradient(270deg, #8aa2ba 0, #8aa2ba 270px, transparent 320px),
    #b1cfeb;
`;

const StartButton = styled.button`
  width: 56px;
  padding-left: 8px;
`;

const Task = styled.button`
  display: flex;
  align-items: center;
  justify-content: center;
  width: ${({ $stacked }) => ($stacked ? 54 : 58)}px;
  height: 39px;
  border: 1px solid ${({ $open }) => ($open ? "#41566e" : "transparent")};
  border-radius: 3px;
  background: ${({ $open }) => ($open ? "linear-gradient(135deg, #e7f0f9, #bcd4ec)" : "none")};
  box-shadow: ${({ $open, $stacked }) =>
    $stacked
      ? "inset 0 0 0 1px #f4f9fd, 4px 0 0 -1px #cfe0f1, 5px 0 0 #5d748c"
      : $open
        ? "inset 0 0 0 1px #dceaf7"
        : "none"};
`;

const Tray = styled.div`
  display: flex;
  align-items: center;
  gap: 8px;
  height: 100%;
  color: #fff;
`;

const Lang = styled.span`
  margin-right: 2px;
`;

const Clock = styled.div`
  display: flex;
  flex-direction: column;
  align-items: center;
  width: 64px;
  margin-left: 8px;
  line-height: 17px;
`;

const ShowDesktop = styled.button`
  width: 15px;
  height: 100%;
  border: 1px solid #5f7790;
  background: linear-gradient(#b9c9d9, #8ea6be 45%, #6f8aa8);
`;
